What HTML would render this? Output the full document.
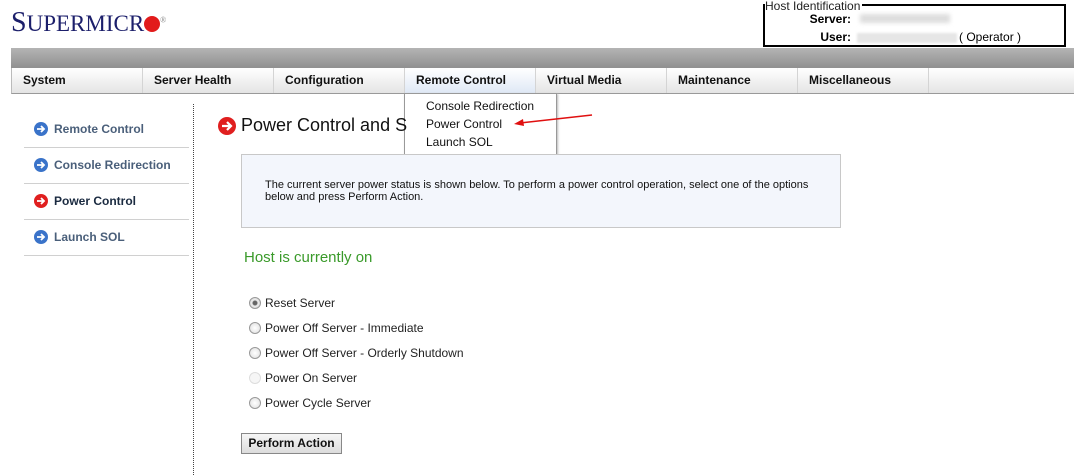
<!DOCTYPE html>
<html><head><meta charset="utf-8"><style>
*{box-sizing:border-box;margin:0;padding:0}
body{width:1074px;height:475px;overflow:hidden;background:#fff;font-family:"Liberation Sans",Arial,sans-serif;position:relative;color:#000}
.abs{position:absolute}
.logo{left:11px;top:7px;font-family:"Liberation Serif",serif;color:#1c1f6b;font-size:23px;letter-spacing:0px}
.logo b{font-weight:normal;font-size:28px}
.band{left:11px;top:48px;width:1063px;height:21px;background:linear-gradient(#b4b4b4,#8e8e8e)}
.nav{left:11px;top:68px;width:1063px;height:26px;background:linear-gradient(#fff,#e4e4e4);border-bottom:1px solid #999;border-left:1px solid #bbb}
.tab{position:absolute;top:0;height:25px;width:131px;border-right:1px solid #d4d4d4;font-size:12px;font-weight:bold;line-height:25px;padding-left:11px;color:#111}
.host{left:763px;top:4px;width:303px;height:43px;border:2px solid #000}
.host .lg{position:absolute;left:0;top:-6px;background:#fff;font-size:12px;line-height:12px;padding-right:2px;color:#222}
.dd{left:404px;top:93px;width:153px;height:62px;background:#fff;border:1px solid #999;box-shadow:1px 1px 2px #bbb;font-size:12px;line-height:18px;padding:3px 0 0 21px;color:#111}
.side{left:24px;width:165px;height:36px;border-bottom:1px solid #d0d0d0;font-size:12px;font-weight:bold;color:#4a5f7a;padding-left:30px;line-height:34px}
.ic{position:absolute;left:10px;top:10px;width:14px;height:14px;border-radius:50%;background:#3a73c9}
.ic.r{background:#e01f1f}
.ic svg{position:absolute;left:0;top:0}
.vd{left:193px;top:104px;height:371px;border-left:1px dotted #444}
.box{left:241px;top:154px;width:600px;height:74px;background:#f3f6fc;border:1px solid #c8c8c8;font-size:11px;line-height:12px;padding:24px 0 0 23px;color:#111}
.rad{left:249px;font-size:12px;color:#222}
.rad i{position:absolute;left:0;top:1px;width:12px;height:12px;border-radius:50%;border:1px solid #999;background:radial-gradient(#fff,#ddd)}
.rad span{position:absolute;left:16px;top:0;white-space:nowrap}
.lbl{position:absolute;right:213px;font-size:12px;font-weight:bold}
</style></head><body>
<div class="abs logo"><b>S</b>UPERMICR<span style="display:inline-block;width:16px;height:16px;border-radius:50%;background:#e21b1b;vertical-align:-1px"></span><sup style="font-size:8px;color:#888">®</sup></div>
<div class="abs host"><div class="lg">Host Identification</div>
<div class="lbl" style="top:6px">Server:</div>
<div class="abs" style="left:95px;top:8px;width:90px;height:9px;background:#ddd;filter:blur(2px)"></div>
<div class="lbl" style="top:24px">User:</div>
<div class="abs" style="left:92px;top:27px;width:100px;height:10px;background:#e6e6e6;filter:blur(1px)"></div>
<div class="abs" style="left:194px;top:24px;font-size:12px">( Operator )</div></div>
<div class="abs band"></div>
<div class="abs nav">
<div class="tab" style="left:0">System</div>
<div class="tab" style="left:131px">Server Health</div>
<div class="tab" style="left:262px">Configuration</div>
<div class="tab" style="left:393px;background:linear-gradient(#fff,#dfe8f5)">Remote Control</div>
<div class="tab" style="left:524px">Virtual Media</div>
<div class="tab" style="left:655px">Maintenance</div>
<div class="tab" style="left:786px">Miscellaneous</div>
</div>
<div class="abs dd">Console Redirection<br>Power Control<br>Launch SOL</div>
<svg class="abs" style="left:510px;top:112px" width="85" height="16"><line x1="82" y1="3" x2="10" y2="11" stroke="#e01010" stroke-width="1.5"/><polygon points="4,12 13,7 14,14" fill="#e01010"/></svg>
<div class="abs side" style="top:112px"><div class="ic"><svg width="14" height="14"><path d="M3 7H10M7 4L10 7L7 10" stroke="#fff" stroke-width="1.8" fill="none"/></svg></div>Remote Control</div>
<div class="abs side" style="top:148px"><div class="ic"><svg width="14" height="14"><path d="M3 7H10M7 4L10 7L7 10" stroke="#fff" stroke-width="1.8" fill="none"/></svg></div>Console Redirection</div>
<div class="abs side" style="top:184px;color:#1a2a40"><div class="ic r"><svg width="14" height="14"><path d="M3 7H10M7 4L10 7L7 10" stroke="#fff" stroke-width="1.8" fill="none"/></svg></div>Power Control</div>
<div class="abs side" style="top:220px"><div class="ic"><svg width="14" height="14"><path d="M3 7H10M7 4L10 7L7 10" stroke="#fff" stroke-width="1.8" fill="none"/></svg></div>Launch SOL</div>
<div class="abs vd"></div>
<div class="abs" style="left:218px;top:117px;width:18px;height:18px;border-radius:50%;background:#e01f1f"><svg width="18" height="18"><path d="M4 9H13M9 5L13 9L9 13" stroke="#fff" stroke-width="2.2" fill="none"/></svg></div>
<div class="abs" style="left:241px;top:115px;font-size:18px;color:#111">Power Control and S</div>
<div class="abs box">The current server power status is shown below. To perform a power control operation, select one of the options<br>below and press Perform Action.</div>
<div class="abs" style="left:244px;top:249px;font-size:15px;color:#3a9a2a">Host is currently on</div>
<div class="abs rad" style="top:296px"><i style="background:radial-gradient(#666 0 2px,#eee 3px,#ccc)"></i><span>Reset Server</span></div>
<div class="abs rad" style="top:321px"><i></i><span>Power Off Server - Immediate</span></div>
<div class="abs rad" style="top:346px"><i></i><span>Power Off Server - Orderly Shutdown</span></div>
<div class="abs rad" style="top:371px"><i style="border-color:#ddd;background:#f6f6f6"></i><span>Power On Server</span></div>
<div class="abs rad" style="top:396px"><i></i><span>Power Cycle Server</span></div>
<div class="abs" style="left:241px;top:433px;width:101px;height:21px;border:1px solid #888;background:linear-gradient(#f6f6f6,#dcdcdc);font-size:12px;font-weight:bold;text-align:center;line-height:19px;color:#111">Perform Action</div>
</body></html>
